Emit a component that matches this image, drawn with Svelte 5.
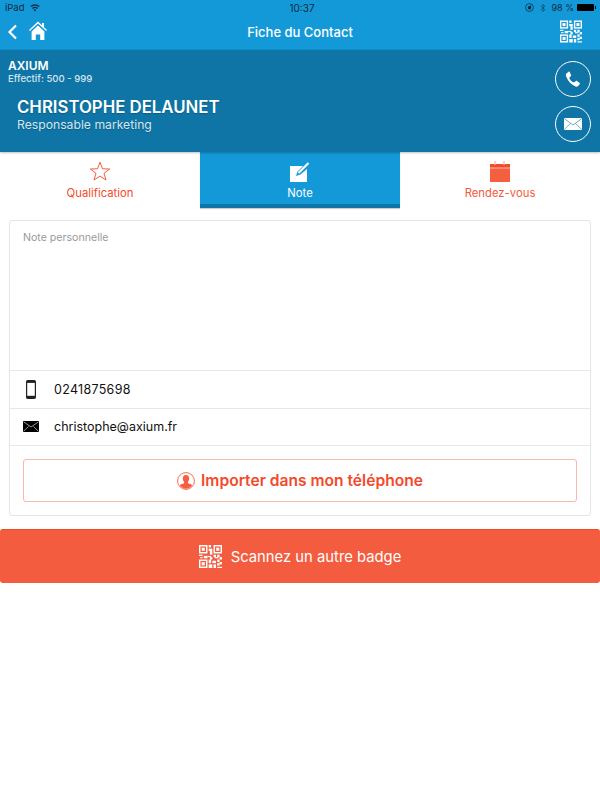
<script>
  const qrDots = [
    [0,0,7,7,0],[8,0,2,2,1],[8,3,3,2,1],[12,0,7,7,0],
    [9,5,2,3,1],[0,8,3,1,1],[4,9,3,2,1],[1,10,2,1,1],[7,9,3,1,1],[9,10,2,2,1],[12,8,2,2,1],[15,8,2,2,1],[13,10,3,1,1],[17,10,2,2,1],
    [0,12,7,7,0],[8,12,2,3,1],[8,16,3,3,1],[11,13,3,2,1],[15,12,2,2,1],[12,16,2,3,1],[15,15,2,2,1],[17,14,2,2,1],[15,18,4,1,1]
  ];
</script>

{#snippet qr(cls)}
  <svg class={cls} viewBox="0 0 19 19" aria-hidden="true">
    {#each qrDots as d}
      {#if d[4]}
        <rect x={d[0]} y={d[1]} width={d[2]} height={d[3]} fill="#fff" />
      {:else}
        <rect x={d[0] + 0.6} y={d[1] + 0.6} width={d[2] - 1.2} height={d[3] - 1.2} fill="none" stroke="#fff" stroke-width="1.2" />
        <rect x={d[0] + 2.2} y={d[1] + 2.2} width={d[2] - 4.4} height={d[3] - 4.4} fill="#fff" />
      {/if}
    {/each}
  </svg>
{/snippet}

<div class="page">
  <header class="topbar">
    <div class="status">
      <div class="st-left">
        <span>iPad</span>
        <svg class="wifi" viewBox="0 0 12 9"><path d="M6 8.600 4.300 6.600a2.600 2.600 0 0 1 3.400 0zM3.400 5.600 2.400 4.400a5.600 5.600 0 0 1 7.200 0l-1 1.200a4 4 0 0 0-5.200 0zM1.500 3.400.4 2.200a8.600 8.600 0 0 1 11.200 0l-1.100 1.200a7 7 0 0 0-9 0z" fill="#0f2a40"/></svg>
      </div>
      <span class="st-time">10:37</span>
      <div class="st-right">
        <svg class="lock" viewBox="0 0 10 10"><circle cx="5" cy="5" r="4.400" fill="none" stroke="#0f2a40" stroke-width=".8"/><path d="M6.500 2.500 5 3.200a2 2 0 1 0 2 2z" fill="#0f2a40"/></svg>
        <svg class="bt" viewBox="0 0 6 11"><path d="M.6 3 5 7.200 3 9.600V1.400l2 2.400L.6 8" fill="none" stroke="#0f2a40" stroke-width=".7" opacity=".8"/></svg>
        <span class="pct">98 %</span>
        <span class="battery"><i></i></span>
      </div>
    </div>
    <div class="nav">
      <div class="nav-left">
        <svg class="back" viewBox="0 0 11 16"><path d="M9 1.500 2.500 8 9 14.500" fill="none" stroke="#fff" stroke-width="2.200"/></svg>
        <svg class="home" viewBox="0 0 18 19"><path d="M9 .5 0 9l.8.9L9 2.400l8.200 7.500.8-.9-3-2.800V2h-2v2.300z" fill="#fff"/><path d="M2.600 10.500 9 4.500l6.400 6V19h-4.200v-5.500H6.800V19H2.600z" fill="#fff"/></svg>
      </div>
      <h1>Fiche du Contact</h1>
      {@render qr('nav-qr')}
    </div>
  </header>

  <section class="hero">
    <div class="company">AXIUM</div>
    <div class="staff">Effectif: 500 - 999</div>
    <div class="person">
      <div class="name">CHRISTOPHE DELAUNET</div>
      <div class="role">Responsable marketing</div>
    </div>
    <div class="actions">
      <span class="circle">
        <svg viewBox="0 0 16 16" class="ph"><path d="M3.600.7 1.400 2.400C.7 3 .7 4.300 1.300 5.800c1.700 4.300 4.700 7.600 8.600 9.500 1.300.6 2.500.4 3.200-.3l1.700-1.900c.3-.4.300-.9-.1-1.200l-2.700-2c-.4-.3-.9-.2-1.200.1l-1 1.100c-.3.3-.7.3-1 .1C6.500 10.900 5.100 9.200 4.300 7.100c-.1-.3 0-.7.3-.9l1.200-.9c.4-.3.5-.8.3-1.200L4.700 1c-.2-.5-.7-.6-1.100-.3z" fill="#fff"/></svg>
      </span>
      <span class="circle">
        <svg viewBox="0 0 18 12" class="ml"><rect width="18" height="12" rx=".8" fill="#fff"/><path d="M.5.800 9 7l8.500-6.200M.5 11.300l6-6M17.500 11.300l-6-6" fill="none" stroke="#0e75a6" stroke-width=".6"/></svg>
      </span>
    </div>
  </section>

  <nav class="tabs">
    <div class="tab">
      <svg class="tab-ico star" viewBox="0 0 22 20"><path d="M11 1.200 13.500 7.800 20.600 8 15 12.300 17 19 11 15.100 5 19 7 12.300 1.400 8 8.500 7.800z" fill="none" stroke="#f4492a" stroke-width=".9"/></svg>
      <span>Qualification</span>
    </div>
    <div class="tab active">
      <svg class="tab-ico" viewBox="0 0 20 21"><path d="M0 5h13l-5.500 5.500-1.500 4.500 4.500-1.500L17 8v13H0z" fill="#fff"/><path d="M8.500 12 18.500 2" stroke="#fff" stroke-width="2.200"/></svg>
      <span>Note</span>
    </div>
    <div class="tab">
      <svg class="tab-ico" viewBox="0 0 20 21"><rect y="3" width="20" height="18" fill="#f55f40"/><rect y="3" width="20" height="3.500" fill="#f4492a"/><path d="M0 7h20" stroke="#fbb9ad" stroke-width="1"/><path d="M5 0v4M14 0v4" stroke="#fbb9ad" stroke-width="1.300"/></svg>
      <span class="rdv">Rendez-vous</span>
    </div>
  </nav>

  <main class="content">
    <div class="card">
      <div class="note">Note personnelle</div>
      <div class="row">
        <span class="row-ico">
          <svg class="mobile" viewBox="0 0 10 19"><rect x=".6" y=".6" width="8.800" height="17.800" rx="1.500" fill="#fff" stroke="#222" stroke-width="1.200"/><rect x=".6" y=".6" width="8.800" height="2.300" fill="#222"/><rect x=".6" y="15.800" width="8.800" height="2.600" fill="#222"/></svg>
        </span>
        <span class="num">0241875698</span>
      </div>
      <div class="row">
        <span class="row-ico">
          <svg class="envelope" viewBox="0 0 16 11"><rect width="16" height="11" fill="#000"/><path d="M.5.800 8 6l7.500-5.200M.5 10.300 5.500 5.500M15.500 10.300l-5-4.800" fill="none" stroke="#fff" stroke-width=".6"/></svg>
        </span>
        <span>christophe@axium.fr</span>
      </div>
      <div class="import-wrap">
        <button class="import">
          <svg class="user" viewBox="0 0 18 18"><circle cx="9" cy="9" r="8.400" fill="#fff" stroke="#f55f40" stroke-width=".9"/><path d="M9 3c-2.200 0-3.200 1.600-3.200 3.500 0 1.400.6 2.600 1.300 3.300v1.400c-1.600.5-3.300 1-4.300 2a7.300 7.300 0 0 0 12.400 0c-1-1-2.700-1.500-4.300-2V9.800c.7-.7 1.300-1.900 1.300-3.300C12.200 4.600 11.200 3 9 3z" fill="#f55f40"/></svg>
          <span>Importer dans mon téléphone</span>
        </button>
      </div>
    </div>
  </main>

  <button class="scan">
    {@render qr('scan-qr')}
    <span>Scannez un autre badge</span>
  </button>
</div>

<style>
  :global(body) { margin: 0; background: #fff; }
  .page { width: 600px; height: 800px; background: #fff; font-family: Inter, "Liberation Sans", sans-serif; overflow: hidden; }
  .topbar { background: #1499d8; height: 50px; box-sizing: border-box; border-bottom: 1px solid #1290cb; }
  .status { height: 15px; display: grid; grid-template-columns: 1fr auto 1fr; align-items: center; padding: 0 5px; font-size: 9.500px; color: #0f2a40; }
  .st-left { display: flex; align-items: center; gap: 5px; }
  .wifi { width: 10px; height: 8px; }
  .st-time { font-size: 10px; margin-left: 4px; }
  .st-right { display: flex; align-items: center; justify-content: flex-end; gap: 4px; }
  .pct { font-size: 9px; }
  .lock { width: 9px; height: 9px; margin-right: 2px; }
  .bt { width: 6px; height: 10px; margin-right: 1px; }
  .battery { width: 17px; height: 7px; background: #000; border-radius: 1px; position: relative; margin-left: -1px; margin-right: 1px; }
  .battery i { position: absolute; right: -2px; top: 2px; width: 1px; height: 3px; background: #000; }
  .nav { display: grid; grid-template-columns: 1fr auto 1fr; align-items: center; height: 34px; padding: 0 18px 0 7px; }
  .nav-left { display: flex; align-items: center; gap: 11px; }
  .back { width: 11px; height: 16px; }
  .home { width: 18px; height: 19px; margin-bottom: 4px; }
  h1 { margin: 0; font-size: 13px; font-weight: 500; color: #fff; position: relative; left: 5.500px; }
  .nav-qr { width: 22px; height: 23px; justify-self: end; margin-top: -1px; }

  .hero { height: 102px; box-sizing: border-box; background: #0e75a6; padding: 9px 8px 0; position: relative; color: #fff; box-shadow: 0 1px 2px rgba(0,0,0,.25); }
  .company { font-size: 12px; font-weight: 600; line-height: 14px; }
  .staff { font-size: 9.600px; font-weight: 500; color: #d6e6ef; line-height: 11px; }
  .person { padding: 13px 0 0 9px; }
  .name { font-size: 16.800px; font-weight: 600; line-height: 20px; text-shadow: 0 1px 1px rgba(0,0,0,.2); }
  .role { font-size: 12.200px; color: #d6e6ef; line-height: 16px; text-shadow: 0 1px 1px rgba(0,0,0,.2); }
  .actions { position: absolute; right: 9px; top: 11px; display: flex; flex-direction: column; gap: 9px; }
  .circle { width: 36px; height: 36px; box-sizing: border-box; border: 1px solid #fff; border-radius: 50%; display: flex; align-items: center; justify-content: center; }
  .ph { width: 16px; height: 16px; }
  .ml { width: 18px; height: 12px; }

  .tabs { display: grid; grid-template-columns: 200px 200px 200px; height: 56px; }
  .tab { display: flex; flex-direction: column; align-items: center; padding-top: 9px; font-size: 11.300px; color: #f4492a; box-sizing: border-box; }
  .tab span { line-height: 14px; margin-top: 4px; }
  .tab .rdv { color: #f25a3c; }
  .tab.active { background: #1499d8; border-bottom: 4px solid #0e75a6; color: #fff; box-shadow: 0 1px 1px rgba(0,0,0,.2); }
  .tab-ico { width: 20px; height: 21px; }
  .star { width: 22px; height: 20px; margin-bottom: 1px; }

  .content { padding: 12px 9px 13px; }
  .card { border: 1px solid #e6e6e6; border-radius: 3px; box-shadow: 0 0 1px rgba(0,0,0,.05); }
  .note { height: 149px; box-sizing: border-box; padding: 10px 13px; font-size: 10.600px; line-height: 14px; color: #9a9a9a; }
  .row { display: flex; align-items: center; height: 37.500px; box-sizing: border-box; border-top: 1px solid #e6e6e6; font-size: 12.500px; color: #111; }
  .num { letter-spacing: .3px; }
  .row-ico { width: 44px; display: flex; justify-content: center; padding-right: 2px; box-sizing: border-box; }
  .mobile { width: 10px; height: 19px; }
  .envelope { width: 16px; height: 11px; }
  .import-wrap { border-top: 1px solid #e6e6e6; padding: 13px 13px 13px; }
  .import { width: 100%; height: 43px; background: #fff; border: 1px solid #fbb9ad; border-radius: 3px; display: flex; align-items: center; justify-content: center; gap: 6px; font: 600 15.600px Inter, "Liberation Sans", sans-serif; color: #f4492a; padding: 0; }
  .user { width: 18px; height: 18px; }

  .scan { width: 600px; height: 54px; border: 0; border-top: 1px solid #ef4a2a; border-radius: 3px; background: #f35c3e; display: flex; align-items: center; justify-content: center; gap: 9px; color: #fff; font: 400 14.800px Inter, "Liberation Sans", sans-serif; padding: 0; }
  .scan-qr { width: 23px; height: 23px; }
</style>
